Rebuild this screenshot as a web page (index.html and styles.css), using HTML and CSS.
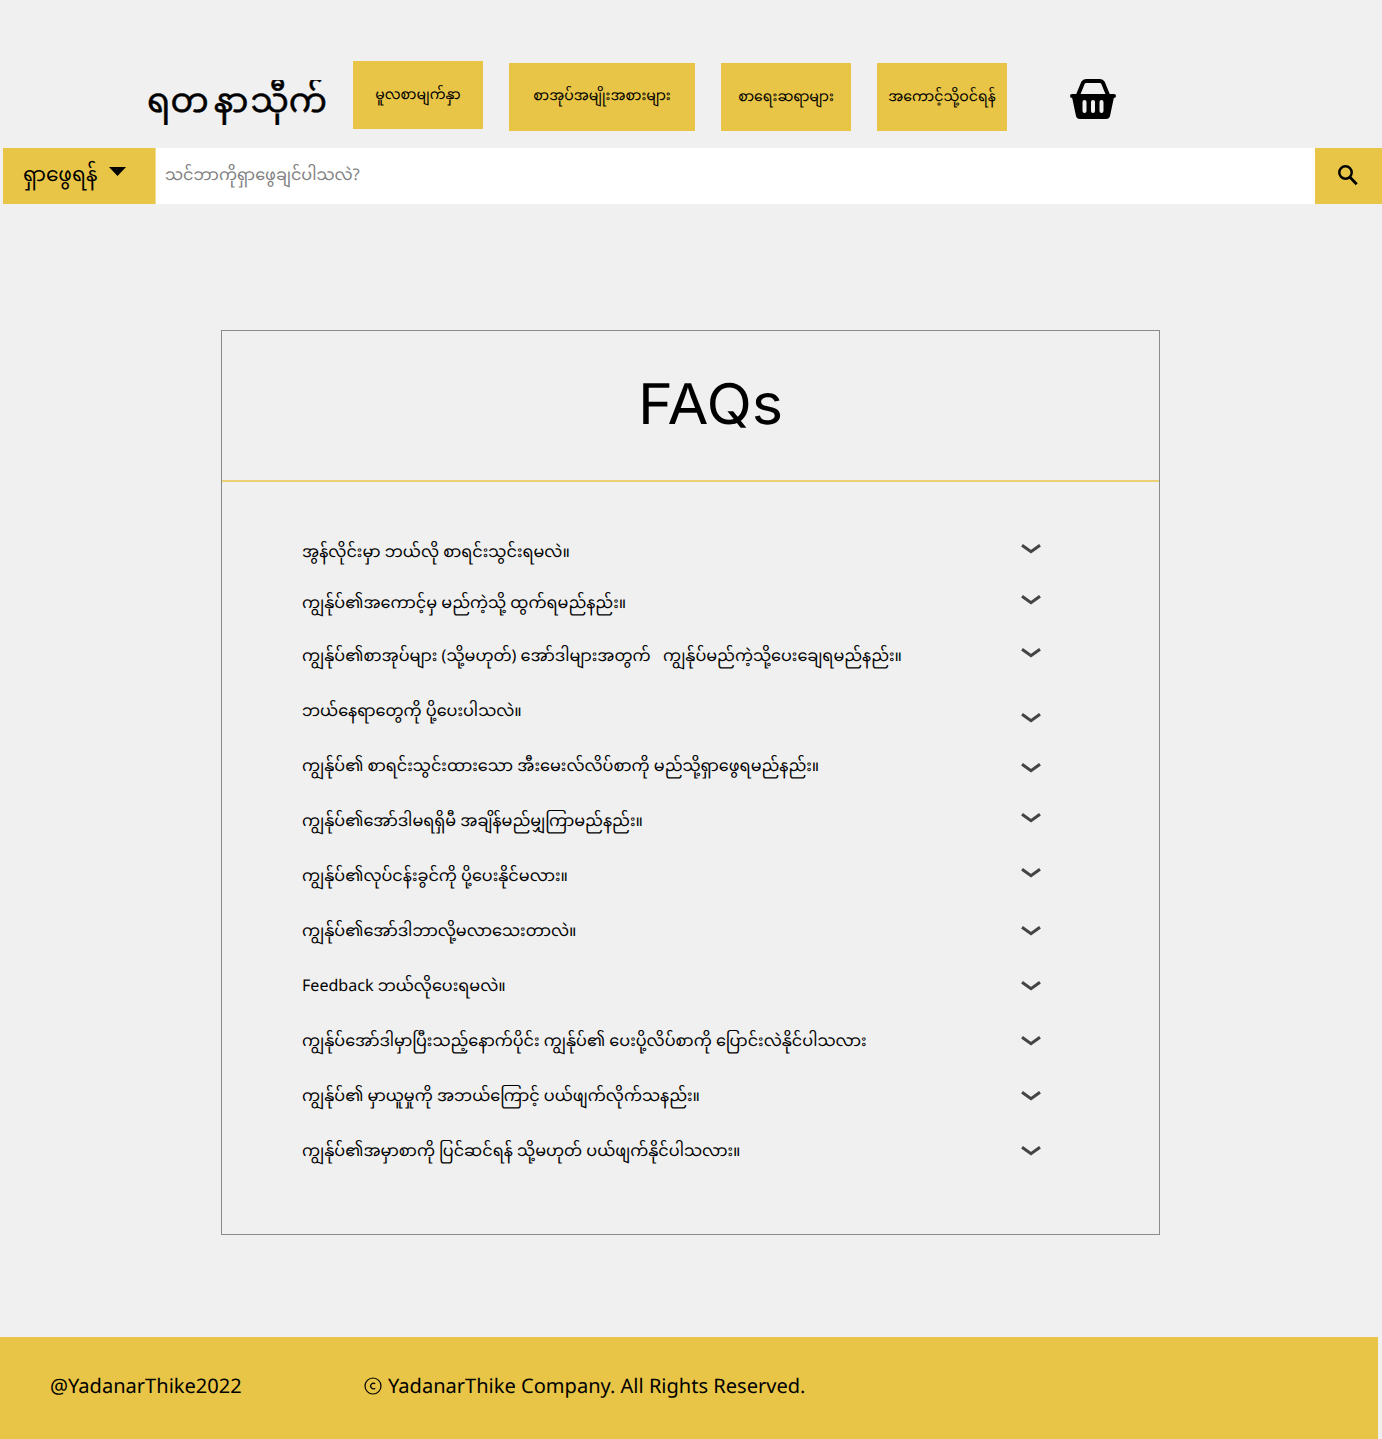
FILE: index.html
```html
<!DOCTYPE html>
<html lang="my">
<head>
<meta charset="utf-8">
<title>FAQs</title>
<link rel="stylesheet" href="styles.css">
</head>
<body>
<svg width="0" height="0" class="defs"><symbol id="chev" viewBox="0 0 20 10"><path d="M1 1.200 10 7.700 19 1.200" fill="none" stroke="#444" stroke-width="3"/></symbol></svg>
<header class="header">
  <div class="logo"><span>ရတ</span><span class="mid">နာ</span><span>သီုက်</span></div>
  <nav class="nav">
    <a class="home"><span>မူလစာမျက်နှာ</span></a>
    <a class="wide"><span>စာအုပ်အမျိုးအစားများ</span></a>
    <a class="writers"><span>စာရေးဆရာများ</span></a>
    <a class="login"><span>အကောင့်သို့ဝင်ရန်</span></a>
  </nav>
  <svg class="basket" width="46" height="40" viewBox="0 0 46 40"><path d="M8 16 13 3.800Q14 2 16 2H30Q32 2 33 3.800L38 16" fill="none" stroke="#000" stroke-width="4"/><path d="M2 15H44Q46 15 46 17T43.800 19L40 37Q39.300 40 36 40H10Q6.700 40 6 37L2.200 19Q0 19 0 17T2 15Z"/><path d="M14.500 23V32M23 23V32M31.500 23V32" stroke="#f0f0f0" stroke-width="4" stroke-linecap="round"/></svg>
</header>
<div class="search">
  <div class="filter"><span>ရှာဖွေရန်</span><svg width="17" height="9" viewBox="0 0 17 9"><path d="M0 0H17L8.500 9Z"/></svg></div>
  <div class="field"><span>သင်ဘာကိုရှာဖွေချင်ပါသလဲ?</span></div>
  <div class="go"><svg width="20" height="21" viewBox="0 0 20 21"><circle cx="7.500" cy="7.500" r="6.200" fill="none" stroke="#000" stroke-width="2.500"/><path d="M12 12.300 18.700 19.300" stroke="#000" stroke-width="2.800"/></svg></div>
</div>
<main class="card">
  <h1><span>FAQs</span></h1>
  <ul class="list">
    <li class="first up"><span>အွန်လိုင်းမှာ ဘယ်လို စာရင်းသွင်းရမလဲ။</span><svg><use href="#chev"/></svg></li>
    <li class="second up"><span>ကျွန်ုပ်၏အကောင့်မှ မည်ကဲ့သို့ ထွက်ရမည်နည်း။</span><svg><use href="#chev"/></svg></li>
    <li class="up"><span>ကျွန်ုပ်၏စာအုပ်များ (သို့မဟုတ်) အော်ဒါများအတွက် &nbsp; ကျွန်ုပ်မည်ကဲ့သို့ပေးချေရမည်နည်း။</span><svg><use href="#chev"/></svg></li>
    <li class="low"><span>ဘယ်နေရာတွေကို ပို့ပေးပါသလဲ။</span><svg><use href="#chev"/></svg></li>
    <li class="down"><span>ကျွန်ုပ်၏ စာရင်းသွင်းထားသော အီးမေးလ်လိပ်စာကို မည်သို့ရှာဖွေရမည်နည်း။</span><svg><use href="#chev"/></svg></li>
    <li class="up"><span>ကျွန်ုပ်၏အော်ဒါမရရှိမီ အချိန်မည်မျှကြာမည်နည်း။</span><svg><use href="#chev"/></svg></li>
    <li class="up"><span>ကျွန်ုပ်၏လုပ်ငန်းခွင်ကို ပို့ပေးနိုင်မလား။</span><svg><use href="#chev"/></svg></li>
    <li><span>ကျွန်ုပ်၏အော်ဒါဘာလို့မလာသေးတာလဲ။</span><svg><use href="#chev"/></svg></li>
    <li><span>Feedback ဘယ်လိုပေးရမလဲ။</span><svg><use href="#chev"/></svg></li>
    <li><span>ကျွန်ုပ်အော်ဒါမှာပြီးသည့်နောက်ပိုင်း ကျွန်ုပ်၏ ပေးပို့လိပ်စာကို ပြောင်းလဲနိုင်ပါသလား</span><svg><use href="#chev"/></svg></li>
    <li><span>ကျွန်ုပ်၏ မှာယူမှုကို အဘယ်ကြောင့် ပယ်ဖျက်လိုက်သနည်း။</span><svg><use href="#chev"/></svg></li>
    <li><span>ကျွန်ုပ်၏အမှာစာကို ပြင်ဆင်ရန် သို့မဟုတ် ပယ်ဖျက်နိုင်ပါသလား။</span><svg><use href="#chev"/></svg></li>
  </ul>
</main>
<footer class="footer">
  <span class="handle">@YadanarThike2022</span>
  <svg width="18" height="18" viewBox="0 0 18 18" fill="none" stroke="#000" stroke-width="1.200"><circle cx="9" cy="9" r="8"/><path d="M11.200 6.800A2.800 2.800 0 1 0 11.200 11.200"/></svg>
  <span>YadanarThike Company. All Rights Reserved.</span>
</footer>
</body>
</html>
```
FILE: styles.css
```css
* { box-sizing: border-box; }
body { margin: 0; background: #f0f0f0; color: #000; font-family: "Noto Sans", "Noto Sans Myanmar", sans-serif; font-size: 16.07px; height: 1439px; overflow: hidden; text-rendering: geometricPrecision; }
span { white-space: nowrap; }
.defs { display: block; }
.header { height: 148px; padding: 61px 0 0 147px; display: flex; align-items: flex-start; }
.logo { width: 181px; height: 45px; margin: 19px 25px 0 0; line-height: 38px; font-size: 34px; display: flex; overflow: hidden; -webkit-text-stroke: 0.5px #000; }
.logo .mid { margin: 0 2px 0 5px; }
.nav { display: flex; gap: 26px; }
.nav a { width: 130px; height: 68px; margin-top: 2px; padding-top: 2px; font-size: 14.08px; display: flex; align-items: center; justify-content: center; }
.nav a, .filter, .go, .footer { background: #e8c547; }
.nav .home { margin-top: 0; }
.nav .wide { width: 186px; padding-top: 0; }
.basket { margin: 18px 0 0 63px; }
.search { height: 56px; padding-left: 3px; display: flex; }
.filter { width: 153px; padding: 2px 0 0 20px; display: flex; align-items: center; font-size: 20.2px; border-right: 1px solid #f1dc91; }
.filter svg { margin: -12px 0 0 12px; }
.field { flex: 1; background: #fff; color: #808080; padding-left: 9px; line-height: 52px; }
.go { width: 67px; display: flex; align-items: center; padding: 0 0 1px 23px; }
.card { width: 939px; height: 905px; margin: 126px 0 0 221px; border: 1px solid #8b8b8b; }
h1 { margin: 0; height: 151px; border-bottom: 2px solid #ebd175; font: 400 56px/147px Inter, sans-serif; text-align: center; padding-left: 40px; }
h1 span { display: inline-block; transform: scaleX(1.06); }
.list { list-style: none; margin: 0; padding: 44px 118px 0 80px; }
.list li { height: 55px; line-height: 50px; display: flex; justify-content: space-between; align-items: flex-start; }
.list .first { height: 51px; }
.list .second { height: 53px; }
.list svg { width: 20px; height: 10px; margin-top: 21px; flex: none; }
.list .up svg { margin-top: 18px; }
.list .low svg { margin-top: 28px; }
.list .down svg { margin-top: 23px; }
.footer { width: 1378px; height: 102px; margin-top: 102px; padding-left: 50px; display: flex; align-items: center; font-size: 20.06px; padding-bottom: 5px; }
.handle { width: 314px; }
.footer svg { margin-right: 6px; }
```
